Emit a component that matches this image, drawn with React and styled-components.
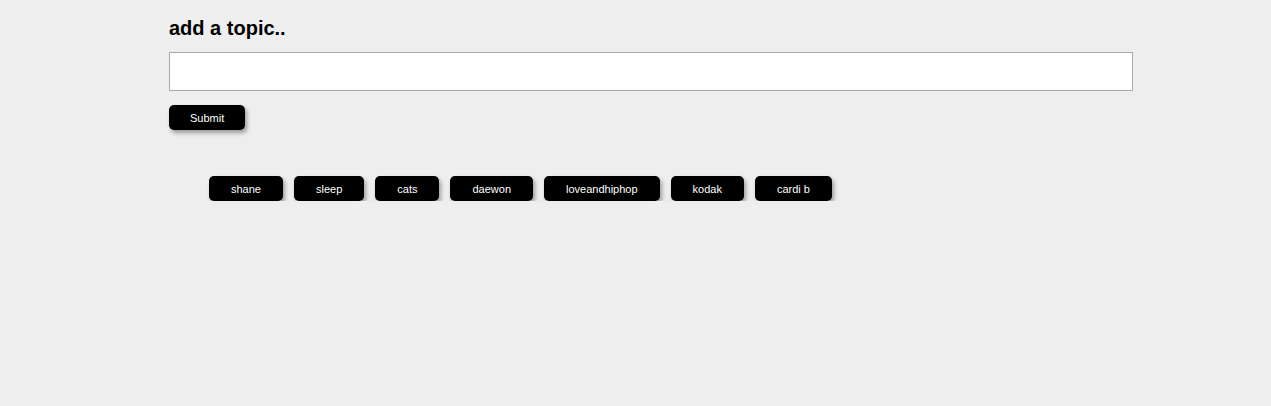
import styled, { createGlobalStyle } from "styled-components";

const GlobalStyle = createGlobalStyle`
  html, body {
    margin: 0;
    background: #eeeeee;
    font-family: "Liberation Sans", Arial, sans-serif;
  }
`;

const Page = styled.div`
  width: 964px;
  padding: 17px 0 0 169px;
`;

const Title = styled.h2`
  margin: 0;
  font-size: 20px;
  font-weight: bold;
  line-height: 23px;
  color: #000;
`;

const TopicInput = styled.input`
  display: block;
  box-sizing: border-box;
  width: 964px;
  height: 39px;
  margin-top: 12px;
  border: 1px solid #aaaaaa;
  background: #fff;
  outline: none;
`;

const Button = styled.button`
  height: 25px;
  padding: 0 ${(p) => p.$pad || 22}px;
  border: none;
  border-radius: 5px;
  background: #000;
  color: #fff;
  font-family: "Liberation Sans", Arial, sans-serif;
  font-size: 11px;
  box-shadow: 2px 3px 4px rgba(0, 0, 0, 0.35);
  cursor: pointer;
`;

const SubmitRow = styled.div`
  margin-top: 14px;
  display: flex;
`;

const Topics = styled.div`
  display: flex;
  gap: 11px;
  margin-top: 46px;
  padding-left: 40px;
`;

const topics = ["shane", "sleep", "cats", "daewon", "loveandhiphop", "kodak", "cardi b"];

export default function App() {
  return (
    <>
      <GlobalStyle />
      <Page>
        <Title>add a topic..</Title>
        <TopicInput type="text" />
        <SubmitRow>
          <Button $pad={21}>Submit</Button>
        </SubmitRow>
        <Topics>
          {topics.map((t) => (
            <Button key={t}>{t}</Button>
          ))}
        </Topics>
      </Page>
    </>
  );
}
